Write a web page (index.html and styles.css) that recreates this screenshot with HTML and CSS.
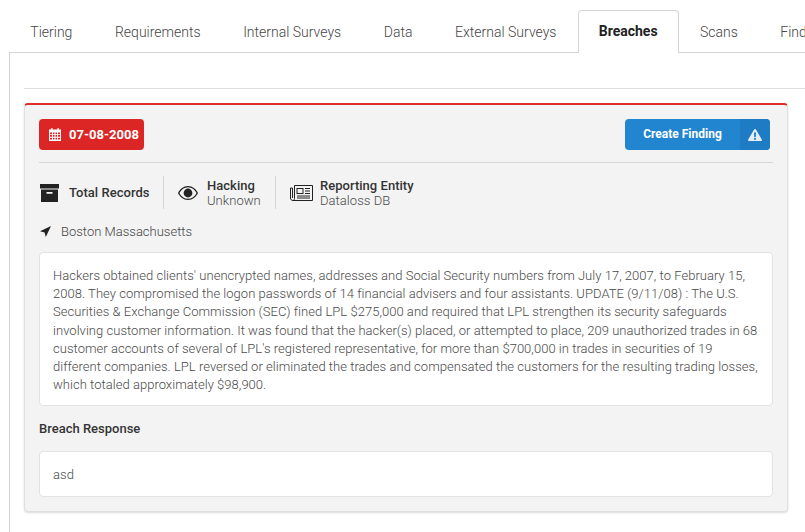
FILE: index.html
```html
<!DOCTYPE html>
<html lang="en">
<head>
<meta charset="utf-8">
<title>Breaches</title>
<link rel="stylesheet" href="styles.css">
</head>
<body>
<nav class="tabs">
  <a class="tab">Tiering</a>
  <a class="tab">Requirements</a>
  <a class="tab">Internal Surveys</a>
  <a class="tab">Data</a>
  <a class="tab">External Surveys</a>
  <a class="tab active">Breaches</a>
  <a class="tab">Scans</a>
  <a class="tab">Findings</a>
</nav>
<main class="content">
  <hr class="rule">
  <section class="card">
    <div class="card-head">
      <span class="date-badge">
        <svg class="cal" viewBox="0 0 12 13" width="12" height="13"><path fill="#fff" fill-rule="evenodd" d="M2.2 0h1.3v1.500h5V0h1.300v1.500H12V13H0V1.500h2.200zM1 4.500v1.700h2V4.500zm3 0v1.700h1.500V4.500zm2.500 0v1.700H8V4.500zm2.500 0v1.700h2V4.500zM1 7.100v1.700h2V7.100zm3 0v1.700h1.500V7.100zm2.500 0v1.700H8V7.100zm2.500 0v1.700h2V7.100zM1 9.700v1.900h2V9.700zm3 0v1.900h1.500V9.700zm2.500 0v1.900H8V9.700zm2.500 0v1.900h2V9.700z"/></svg>
        07-08-2008
      </span>
      <button class="finding-btn">
        <span class="finding-label">Create Finding</span>
        <span class="finding-icon">
          <svg viewBox="0 0 14 12" width="14" height="12"><path fill="#e4eef8" fill-rule="evenodd" d="M7 0c.4 0 .7.2.9.500l5.900 10c.4.700-.1 1.500-.9 1.500H1.100c-.8 0-1.300-.8-.9-1.500l5.900-10C6.300.2 6.600 0 7 0zM6 3.500l.2 4.500h1.600L8 3.500zM7 8.700a1.100 1.100 0 1 0 0 2.200 1.100 1.100 0 0 0 0-2.200z"/></svg>
        </span>
      </button>
    </div>
    <div class="stats">
      <div class="stat stat-first">
        <svg class="ic-archive" viewBox="0 0 19 18" width="19" height="18"><path fill="#222" fill-rule="evenodd" d="M0 0h19v4.500H0zM1 5.500h17V18H1zM6.500 8v1.800h6V8z"/></svg>
        <strong class="stat-title">Total Records</strong>
      </div>
      <div class="stat stat-mid">
        <svg class="ic-eye" viewBox="0 0 20 14" width="20" height="14"><path fill="#222" fill-rule="evenodd" d="M10 0c4.500 0 8 3 10 7-2 4-5.500 7-10 7S2 11 0 7c2-4 5.500-7 10-7zm0 1.200C6.300 1.200 3.300 3.500 1.400 7c1.900 3.500 4.900 5.800 8.600 5.800s6.700-2.300 8.600-5.800c-1.900-3.500-4.900-5.800-8.600-5.800zM10 2.600a4.400 4.400 0 1 1 0 8.800 4.400 4.400 0 0 1 0-8.800z"/></svg>
        <div class="stat-text">
          <strong class="stat-title">Hacking</strong>
          <span class="stat-sub">Unknown</span>
        </div>
      </div>
      <div class="stat stat-last">
        <svg class="ic-news" viewBox="0 0 23 16" width="23" height="16"><g fill="none" stroke="#222" stroke-width="1"><path d="M4.500 .5h18v15H3c-1.400 0-2.500-1-2.500-2.500V3h2v10"/><path d="M4.500 .5v13c0 1-.6 2-1.500 2"/><rect x="7" y="3.500" width="6" height="5"/><path d="M15 3.500h5M15 6h5M15 8.500h5M7 11h13M7 13h13"/></g></svg>
        <div class="stat-text">
          <strong class="stat-title">Reporting Entity</strong>
          <span class="stat-sub">Dataloss DB</span>
        </div>
      </div>
    </div>
    <div class="location">
      <svg viewBox="0 0 11 11" width="11" height="11"><path fill="#222" d="M11 0 5.800 11 4.600 6.400 0 5.200z"/></svg>
      <span>Boston Massachusetts</span>
    </div>
    <div class="well well-desc">Hackers obtained clients' unencrypted names, addresses and Social Security numbers from July 17, 2007, to February 15, 2008. They compromised the logon passwords of 14 financial advisers and four assistants. UPDATE (9/11/08) : The U.S. Securities &amp; Exchange Commission (SEC) fined LPL $275,000 and required that LPL strengthen its security safeguards involving customer information. It was found that the hacker(s) placed, or attempted to place, 209 unauthorized trades in 68 customer accounts of several of LPL's registered representative, for more than $700,000 in trades in securities of 19 different companies. LPL reversed or eliminated the trades and compensated the customers for the resulting trading losses, which totaled approximately $98,900.</div>
    <h4 class="section-title">Breach Response</h4>
    <div class="well well-resp">asd</div>
  </section>
</main>
</body>
</html>
```
FILE: styles.css
```css
* { box-sizing: border-box; }
html, body { margin: 0; padding: 0; height: 532px; overflow: hidden; background: #fff; }
body { font-family: Roboto, sans-serif; font-size: 13px; color: #333; width: 805px; }

.tabs { display: flex; margin: 10px 0 0 9px; height: 43px; width: 900px; border-bottom: 1px solid #d4d4d4; }
.tab { flex: none; height: 43px; padding: 13px 20.3px 0; font-size: 14px; line-height: 17px; font-weight: 300; color: #444; border: 1px solid transparent; border-bottom: 0; }
.active { font-weight: 700; color: #222; background: #fff; border-color: #d4d4d4; border-radius: 4px 4px 0 0; padding: 12px 20px 0; }

.content { width: 900px; height: 480px; margin-left: 9px; border-left: 1px solid #d4d4d4; padding: 35px 0 0 14px; }
.rule { border: 0; border-top: 1px solid #dedede; margin: 0 0 14px; }

.card { width: 764px; height: 409px; background: #f3f3f3; border: 1px solid #e0e0e0; border-top: 2px solid #e02b2b; border-radius: 4px; box-shadow: 0 1px 2px rgba(0,0,0,.15); padding: 14px 14px 0 14px; }

.card-head { display: flex; justify-content: space-between; align-items: flex-start; height: 44px; padding-right: 3px; border-bottom: 1px solid #d6d6d6; }
.date-badge { display: flex; align-items: center; gap: 8px; width: 105px; height: 31px; padding-left: 10px; background: #dc2626; color: #fff; font-weight: 700; font-size: 13px; border-radius: 4px; }
.finding-btn { display: flex; width: 145px; height: 31px; padding: 0; border: 0; background: #2185d0; color: #fff; border-radius: 4px; font: 700 12px Roboto, sans-serif; overflow: hidden; }
.finding-label { flex: 1; line-height: 30px; text-align: center; }
.finding-icon { display: flex; align-items: center; justify-content: center; width: 30px; height: 31px; background: #1e7cc4; }

.stats { display: flex; align-items: center; margin-top: 13px; height: 33px; }
.stat { display: flex; align-items: center; height: 33px; padding: 0 14px; border-right: 1px solid #d6d6d6; gap: 9px; white-space: nowrap; }
.stat svg { flex: none; }
.stat-first { padding: 0 0 0 1px; width: 125px; gap: 10px; }
.stat-mid { width: 112px; }
.stat-last { border-right: 0; gap: 7px; }
.stat-text { display: flex; flex-direction: column; }
.stat-title { font-size: 13px; line-height: 15px; font-weight: 500; color: #333; letter-spacing: .03px; }
.stat-sub { font-size: 13px; line-height: 15px; font-weight: 300; color: #4a4a4a; letter-spacing: .05px; }

.location { display: flex; align-items: center; gap: 10px; margin-top: 14px; height: 16px; padding-left: 1px; font-size: 13px; font-weight: 300; color: #444; }

.well { background: #fff; border: 1px solid #e2e2e2; border-radius: 4px; font-size: 13px; font-weight: 300; line-height: 18.2px; letter-spacing: .035px; color: #4a4a4a; padding: 14px 13px; }
.well-desc { margin-top: 13px; height: 154px; }
.section-title { margin: 15px 0 14px; font-size: 13px; line-height: 16px; font-weight: 500; color: #333; }
.well-resp { height: 46px; }
```
